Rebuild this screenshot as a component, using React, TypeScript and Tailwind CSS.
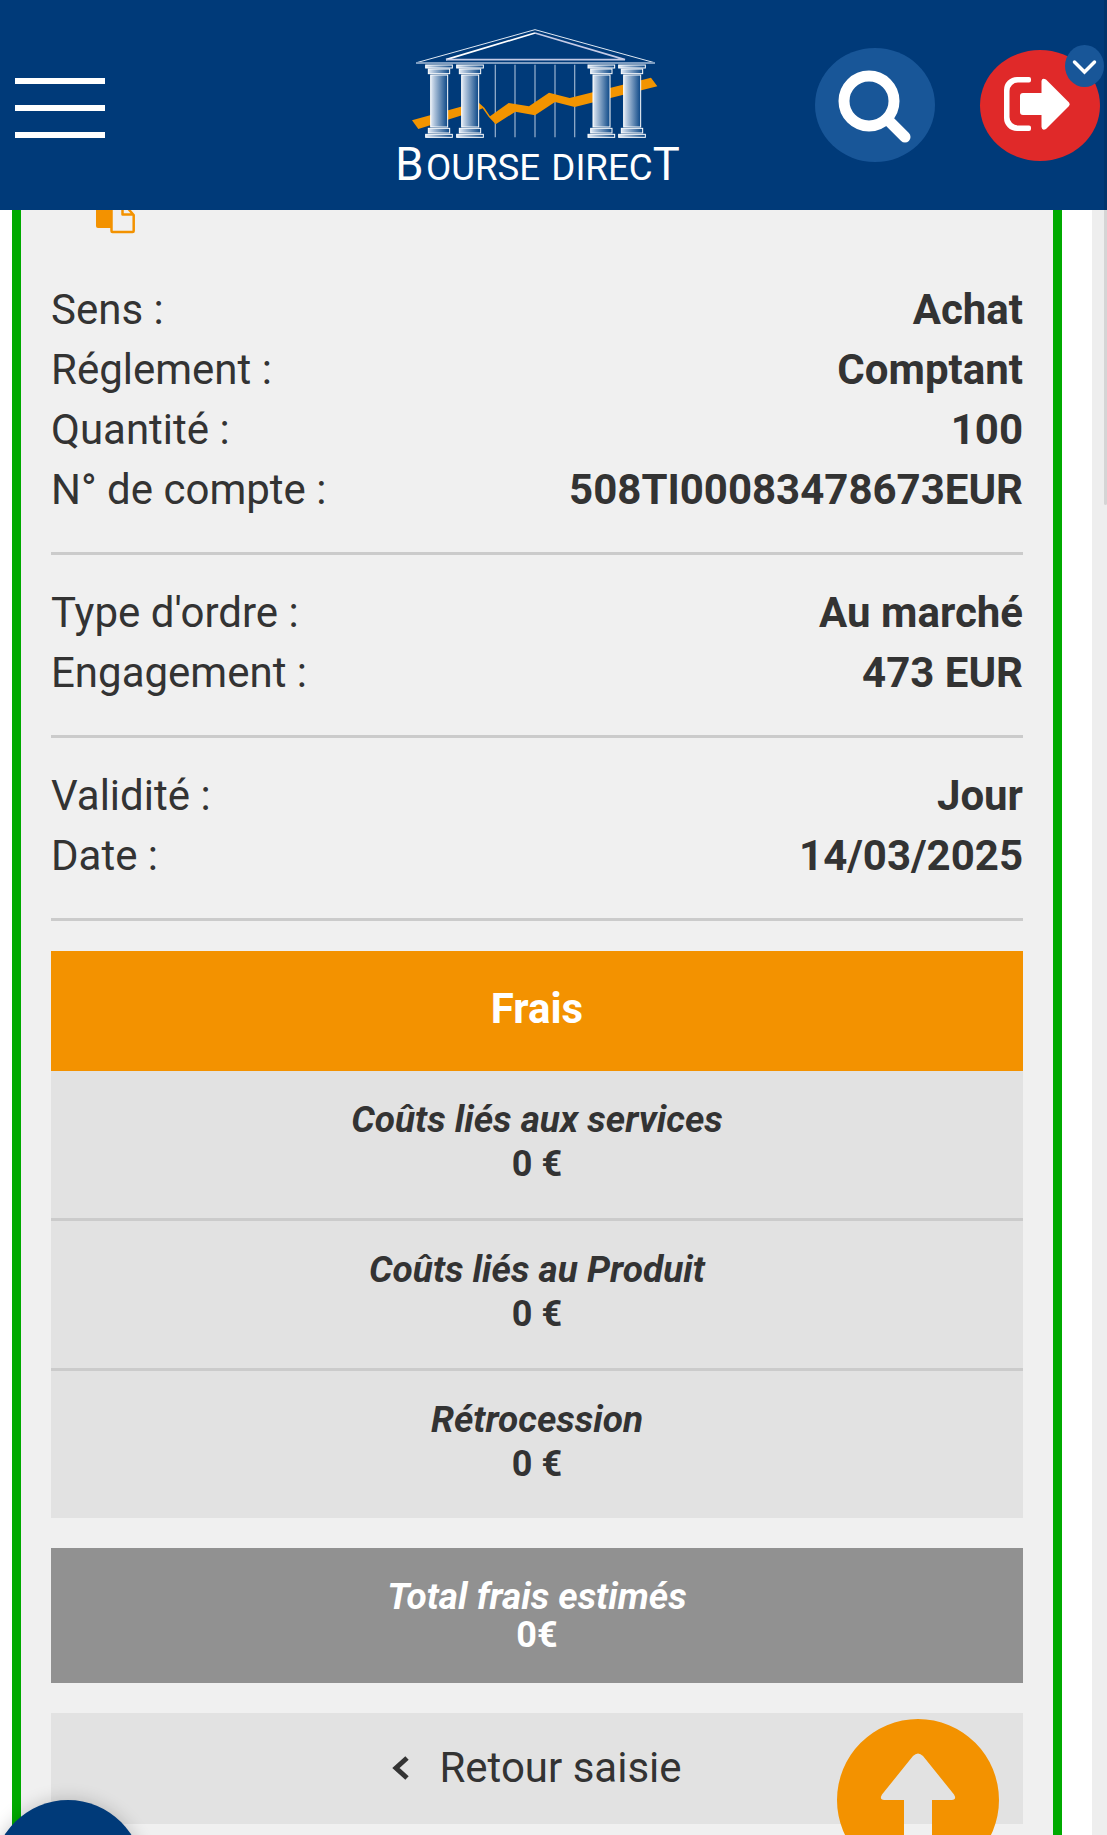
interface Detail {
  label: string;
  value: string;
}

const detailGroups: Detail[][] = [
  [
    { label: "Sens :", value: "Achat" },
    { label: "Réglement :", value: "Comptant" },
    { label: "Quantité :", value: "100" },
    { label: "N° de compte :", value: "508TI00083478673EUR" },
  ],
  [
    { label: "Type d'ordre :", value: "Au marché" },
    { label: "Engagement :", value: "473 EUR" },
  ],
  [
    { label: "Validité :", value: "Jour" },
    { label: "Date :", value: "14/03/2025" },
  ],
];

const fees: Detail[] = [
  { label: "Coûts liés aux services", value: "0 €" },
  { label: "Coûts liés au Produit", value: "0 €" },
  { label: "Rétrocession", value: "0 €" },
];

function Column({ x }: { x: number }) {
  return (
    <g stroke="#fff" strokeWidth="3" fill="url(#stone)">
      <rect x={x} y="165" width="80" height="9" />
      <rect x={x + 8} y="177" width="64" height="14" />
      <rect x={x + 15} y="195" width="51" height="156" />
      <rect x={x + 8} y="355" width="64" height="14" />
      <rect x={x} y="373" width="80" height="9" />
    </g>
  );
}

function Logo() {
  return (
    <svg viewBox="39 30 864 510" className="w-[288px] h-[170px]" role="img" aria-label="Bourse Direct">
      <defs>
        <linearGradient id="stone" x1="0" x2="1" y1="0" y2="0">
          <stop offset="0" stopColor="#e3ebf5" />
          <stop offset="0.25" stopColor="#a9bfd8" />
          <stop offset="1" stopColor="#0a4686" />
        </linearGradient>
      </defs>
      {/* Pediment */}
      <path d="M110 158 L465 59 L823 158" fill="none" stroke="#dfe8f3" strokeWidth="3" />
      <path d="M108 159 H825" stroke="#7d9cc0" strokeWidth="6" />
      <path d="M198 149 L465 69" stroke="#fff" strokeWidth="5" fill="none" />
      <path d="M465 69 L735 149 H198" stroke="#c5cbe6" strokeWidth="5" fill="none" />
      {[346, 405, 465, 525, 584].map((x) => (
        <path key={x} d={`M${x} 164 V382`} stroke="#8ba7c7" strokeWidth="4" />
      ))}
      {/* Price curve */}
      <path
        d="M96 331 L294 276 L313 293 L330 319 L386 279 L447 289 L507 248 L569 264 L813 203 L832 229 L584 291 L525 276 L465 316 L406 305 L347 343 L326 320 L308 295 L296 300 L115 357 Z"
        fill="#f29400"
      />
      <Column x={137} />
      <Column x={230} />
      <Column x={624} />
      <Column x={716} />
      <text y="511" fill="#fff" fontFamily="Roboto, sans-serif">
        <tspan x="46" fontSize="136">B</tspan>
        <tspan x="138" fontSize="110">OURSE</tspan>
        <tspan x="514" fontSize="110">DIREC</tspan>
        <tspan x="818" fontSize="136">T</tspan>
      </text>
    </svg>
  );
}

function Header() {
  return (
    <header className="relative z-10 grid grid-cols-[1fr_auto_1fr] items-center h-[210px] pr-[33px] bg-[#003a79]">
      <button type="button" aria-label="Menu" className="flex flex-col gap-[21px] w-[90px] mt-1.5 ml-[15px]">
        <span className="w-full h-1.5 bg-white" />
        <span className="w-full h-1.5 bg-white" />
        <span className="w-full h-1.5 bg-white" />
      </button>
      <a href="#accueil">
        <Logo />
      </a>
      <div className="flex items-center justify-end gap-[45px] -mr-[26px]">
        <button type="button" aria-label="Rechercher" className="shrink-0 w-[120px] h-[114px] rounded-[50%] bg-[#185698]">
          <svg viewBox="0 0 120 114" fill="none" stroke="#fff" strokeWidth="11" strokeLinecap="round">
            <circle cx="54" cy="53" r="25" />
            <path d="M72 71 L90 89" />
          </svg>
        </button>
        <div className="relative shrink-0">
          <button type="button" aria-label="Déconnexion" className="block w-[120px] h-[111px] rounded-[50%] bg-[#e02929]">
            <svg viewBox="0 0 120 111">
              <path
                d="M49 27 H37 A13 13 0 0 0 24 40 V68 A13 13 0 0 0 37 81 H49 Q51 81 51 79 V77.500 Q51 75.500 49 75.500 H38 A8.500 8.500 0 0 1 29.500 67 V41 A8.500 8.500 0 0 1 38 32.500 H49 Q51 32.500 51 30.500 V29 Q51 27 49 27 Z"
                fill="#fff"
              />
              <path
                d="M43 43 H61.500 V31 Q62 27.500 66 29.500 L89 52.500 Q90.500 54.300 89 56 L66 79 Q62 81 61.500 77 V65 H43 Q40 65 40 62 V46 Q40 43 43 43 Z"
                fill="#fff"
              />
            </svg>
          </button>
          <button
            type="button"
            aria-label="Options du compte"
            className="absolute -top-[5px] -right-1 w-[39px] h-[42px] rounded-[50%] bg-[#185698]"
          >
            <svg viewBox="0 0 39 42" fill="none" stroke="#fff" strokeWidth="3.500" strokeLinecap="round">
              <path d="M9.500 17 L19.500 27 L29.500 17" />
            </svg>
          </button>
        </div>
      </div>
    </header>
  );
}

export default function App() {
  return (
    <div className="min-h-screen flex flex-col bg-[#eeeeee] font-[Roboto,sans-serif] text-[#333333]">
      <Header />

      <div className="flex-1 flex flex-col mr-[15px] pl-3 pr-[30px] bg-white">
        <main className="flex-1 px-[30px] bg-[#f0f0f0] border-x-[9px] border-[#00aa00]">
          {/* Partly hidden by the header */}
          <button type="button" aria-label="Copier" className="block -mt-4 ml-[45px] mb-[46px]">
            <svg viewBox="0 0 39 40" className="w-[39px] h-10">
              <rect x="0" y="3" width="30" height="31" rx="2" fill="#f39200" />
              <path
                d="M15.500 11 V37 Q15.500 38 16.500 38 H36.500 Q37.700 38 37.700 37 V21 L28 10 H16.500 Z M26.500 10 V20.500 H37.500"
                fill="#f0f0f0"
                stroke="#f39200"
                strokeWidth="2.500"
                strokeLinejoin="round"
              />
            </svg>
          </button>

          {detailGroups.map((group) => (
            <dl key={group[0].label} className="pt-7 pb-8 first-of-type:pt-0 border-b-3 border-[#cbcbcb] text-[42px] leading-[60px]">
              {group.map((row) => (
                <div key={row.label} className="flex justify-between">
                  <dt>{row.label}</dt>
                  <dd className="font-bold">{row.value}</dd>
                </div>
              ))}
            </dl>
          ))}

          <section className="mt-[30px] text-center font-bold">
            <h2 className="pt-7 pb-8 bg-[#f39200] text-white text-[42px] leading-[60px]">Frais</h2>
            <dl className="bg-[#e2e2e2] text-[36px] leading-[45px]">
              {fees.map((fee) => (
                <div key={fee.label} className="pt-[26px] pb-[31px] border-b-3 border-[#cbcbcb] last:border-b-0">
                  <dt className="italic text-[37px]">{fee.label}</dt>
                  <dd>{fee.value}</dd>
                </div>
              ))}
            </dl>
            <dl className="mt-[30px] pt-[29px] pb-7 bg-[#919191] text-white text-[36px] leading-[39px]">
              <dt className="italic text-[37px]">Total frais estimés</dt>
              <dd>0€</dd>
            </dl>
          </section>

          <button
            type="button"
            className="flex items-center justify-center gap-[30px] w-full mt-[30px] pt-6 pb-[26px] bg-[#e2e2e2] text-[42px] leading-[61px]"
          >
            <svg viewBox="0 0 17 24" className="w-[17px] h-6" fill="none" stroke="#333" strokeWidth="5">
              <path d="M15 2 L4 12 L15 22" />
            </svg>
            Retour saisie
          </button>
        </main>
      </div>

      <button
        type="button"
        aria-label="Aide"
        className="fixed -left-[7px] -bottom-[115px] w-[150px] h-[150px] rounded-full bg-[#003a79] shadow-[0_0_18px_rgba(0,0,0,0.2)]"
      />
      <a href="#top" aria-label="Haut de page" className="fixed right-[108px] -bottom-[46px]">
        <svg viewBox="0 0 162 162" className="w-[162px] h-[162px]">
          <path
            fillRule="evenodd"
            fill="#f39200"
            d="M81 0 A81 81 0 0 1 81 162 A81 81 0 0 1 81 0 Z M76 37 L45 75.500 Q42 80.500 47 81 H67 V130 H95 V81 H115 Q120 80.500 117 75.500 L86 37 Q81 32 76 37 Z"
          />
        </svg>
      </a>
      <div className="fixed z-20 top-0 right-0 w-[3px] h-[505px] rounded-b-full bg-black/10" />
    </div>
  );
}
